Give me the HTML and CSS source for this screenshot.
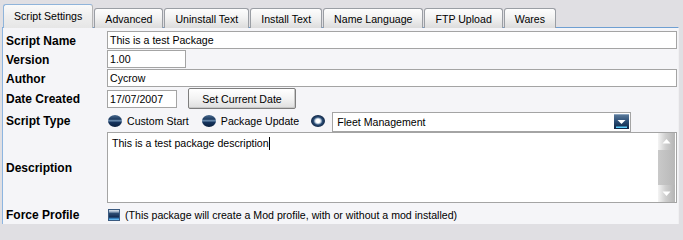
FILE: index.html
```html
<!DOCTYPE html>
<html>
<head>
<meta charset="utf-8">
<link rel="stylesheet" href="styles.css">
</head>
<body>
<div class="window">
  <div class="tabs">
    <div class="tab active">Script Settings</div>
    <div class="tab">Advanced</div>
    <div class="tab">Uninstall Text</div>
    <div class="tab">Install Text</div>
    <div class="tab">Name Language</div>
    <div class="tab">FTP Upload</div>
    <div class="tab">Wares</div>
  </div>
  <div class="panel">
    <div class="form">
      <div class="lbl">Script Name</div>
      <div class="field"><div class="input grow">This is a test Package</div></div>

      <div class="lbl">Version</div>
      <div class="field"><div class="input version">1.00</div></div>

      <div class="lbl">Author</div>
      <div class="field"><div class="input grow">Cycrow</div></div>

      <div class="lbl">Date Created</div>
      <div class="field">
        <div class="input date">17/07/2007</div>
        <div class="button">Set Current Date</div>
      </div>

      <div class="lbl">Script Type</div>
      <div class="field">
        <span class="radio"></span><span class="rtext">Custom Start</span>
        <span class="radio"></span><span class="rtext">Package Update</span>
        <span class="radio selected"></span>
        <div class="combo">
          <span class="combo-text">Fleet Management</span>
          <span class="combo-btn">
            <svg width="15" height="15" viewBox="0 0 15 15">
              <defs>
                <linearGradient id="cb" x1="0" y1="0" x2="0" y2="1">
                  <stop offset="0" stop-color="#5f7e9e"/>
                  <stop offset="0.5" stop-color="#2a4c74"/>
                  <stop offset="1" stop-color="#0e2444"/>
                </linearGradient>
              </defs>
              <rect x="0" y="0" width="15" height="15" fill="url(#cb)"/>
              <rect x="0" y="0" width="15" height="1" fill="#8aa4c0"/>
              <path d="M3.5 6 L11.5 6 L7.5 10 Z" fill="#ffffff"/>
              <rect x="2" y="12.5" width="11" height="1.5" fill="#5fd0ff"/>
            </svg>
          </span>
        </div>
      </div>

      <div class="lbl">Description</div>
      <div class="field">
        <div class="textarea">
          <div class="ta-text">This is a test package description<span class="caret"></span></div>
          <div class="scrollbar">
            <div class="sb-btn">
              <svg width="17" height="17" viewBox="0 0 17 17"><path d="M4.5 10.5 L12.5 10.5 L8.5 6 Z" fill="#ffffff"/></svg>
            </div>
            <div class="sb-track"></div>
            <div class="sb-btn">
              <svg width="17" height="17" viewBox="0 0 17 17"><path d="M4.5 6.5 L12.5 6.5 L8.5 11 Z" fill="#ffffff"/></svg>
            </div>
          </div>
        </div>
      </div>

      <div class="lbl">Force Profile</div>
      <div class="field">
        <span class="check"></span><span class="rtext">(This package will create a Mod profile, with or without a mod installed)</span>
      </div>
    </div>
  </div>
</div>
</body>
</html>
```

FILE: styles.css
```css
html, body {
  margin: 0;
  padding: 0;
}
body {
  background: #e0dfe3;
  font-family: "Liberation Sans", Arial, sans-serif;
  font-size: 10.6px;
  color: #000;
  width: 683px;
  height: 232px;
  overflow: hidden;
}
.window {
  padding-top: 4px;
}
.tabs {
  display: flex;
  align-items: flex-end;
  gap: 1px;
  padding-left: 3px;
  height: 24px;
  position: relative;
  z-index: 2;
}
.tab {
  height: 20px;
  box-sizing: border-box;
  padding: 1px 10px 0;
  border: 1px solid #9a9ea4;
  border-bottom: none;
  border-radius: 3px 3px 0 0;
  background: linear-gradient(#fdfdfd, #f2f2f2 45%, #dcdcdc);
  display: flex;
  align-items: center;
  white-space: nowrap;
  line-height: 12px;
}
.tab.active {
  height: 24px;
  padding: 0 10px 2px;
  border-color: #8fb4da;
  border-right-color: #b5b5b5;
  background: linear-gradient(#fafafa, #eeeeee 50%, #e6e6e6);
}
.panel {
  margin-left: 2px;
  width: 677px;
  height: 197px;
  box-sizing: border-box;
  border-top: 1px solid #6f9fd2;
  border-left: 1px solid #8db5e0;
  border-right: 1px solid #f0f0f2;
  background: #f5f5f8;
  padding: 3px 1px 0 3px;
  position: relative;
  z-index: 1;
  margin-top: -1px;
}
.form {
  display: grid;
  grid-template-columns: 101px 570px;
  grid-template-rows: 18px 18px 18px 21px 21px 71px 21px;
  row-gap: 1px;
}
.lbl {
  font-weight: bold;
  font-size: 12px;
  display: flex;
  align-items: center;
  white-space: nowrap;
  padding-top: 1px;
}
.field {
  display: flex;
  align-items: center;
  min-width: 0;
}
.input {
  height: 18px;
  box-sizing: border-box;
  border: 1px solid #a4a4a4;
  background: #fff;
  padding: 0 2px;
  display: flex;
  align-items: center;
  white-space: nowrap;
}
.grow {
  flex: 1;
}
.version {
  width: 79px;
}
.date {
  width: 70px;
}
.button {
  margin-left: 11px;
  width: 108px;
  height: 21px;
  box-sizing: border-box;
  border: 1px solid #7e7e7e;
  border-radius: 2px;
  background: linear-gradient(#ffffff, #f3f3f3 50%, #dedede);
  box-shadow: inset -1px -1px 0 #c8c8c8;
  display: flex;
  align-items: center;
  justify-content: center;
}
.radio {
  width: 14px;
  height: 12px;
  border-radius: 50%;
  margin-left: 1px;
  background: linear-gradient(#4a6a8e 0%, #1d3b60 35%, #7092b5 48%, #15345e 60%, #0a1f3d 100%);
  flex: none;
}
.radio.selected {
  width: 14px;
  height: 12px;
  margin-left: 0;
  background: radial-gradient(ellipse at 50% 50%, #ffffff 0, #ffffff 2px, #b9c9da 3px, #2a4c74 4.5px, #0e2444 7px);
}
.rtext {
  margin-left: 5px;
  margin-right: 12px;
  white-space: nowrap;
}
.combo {
  margin-left: 7px;
  width: 299px;
  height: 20px;
  box-sizing: border-box;
  border: 1px solid #a4a4a4;
  background: #fff;
  display: flex;
  align-items: center;
  justify-content: space-between;
  padding: 0 1px 0 4px;
  margin-top: 2px;
}
.combo-btn {
  width: 15px;
  height: 15px;
  display: flex;
}
.textarea {
  flex: 1;
  align-self: stretch;
  box-sizing: border-box;
  border: 1px solid #a4a4a4;
  background: #fff;
  display: flex;
}
.ta-text {
  flex: 1;
  padding: 4px 4px;
  white-space: nowrap;
  line-height: 13px;
}
.caret {
  display: inline-block;
  width: 1px;
  height: 13px;
  background: #000;
  vertical-align: -3px;
}
.scrollbar {
  width: 17px;
  display: flex;
  flex-direction: column;
  background: #bdbdbd;
  margin-right: 1px;
}
.sb-btn {
  height: 17px;
  background: linear-gradient(to right, #f4f4f4, #cfcfcf 45%, #b4b4b4);
  display: flex;
}
.sb-track {
  flex: 1;
  background: linear-gradient(to right, #c9c9c9, #b8b8b8);
}
.check {
  width: 12px;
  height: 12px;
  margin-left: 1px;
  flex: none;
  box-sizing: border-box;
  border: 1px solid #3a5a80;
  background: linear-gradient(#dfe6ee 0%, #9aaec4 18%, #2c4b72 35%, #132c52 70%, #3c8fd0 88%, #7fd0ff 100%);
}
.field .rtext:last-child {
  margin-right: 0;
}
```
